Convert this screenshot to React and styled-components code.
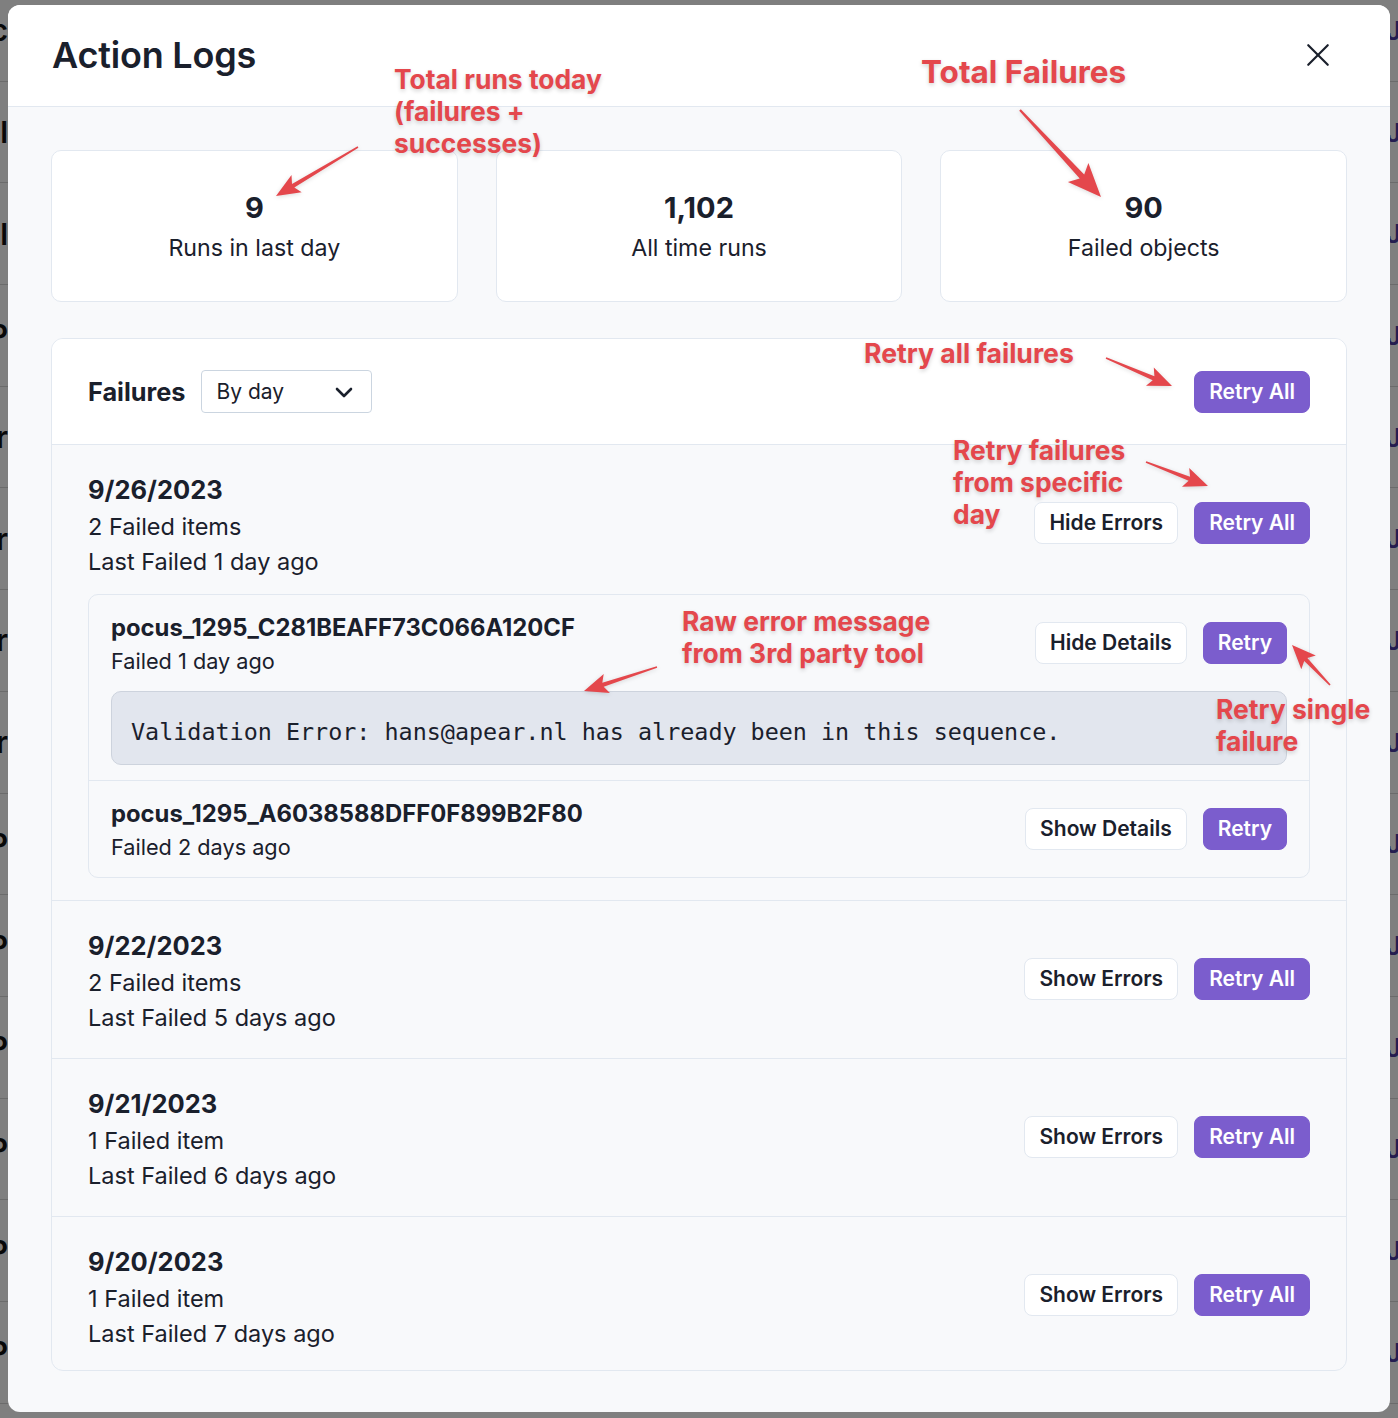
import React from 'react';
import styled, { createGlobalStyle } from 'styled-components';

const GlobalStyle = createGlobalStyle`
  html, body {
    margin: 0;
    padding: 0;
  }
  body {
    font-family: Inter, "Noto Sans", "Liberation Sans", sans-serif;
    color: #1a202c;
    background: #ffffff;
    overflow: hidden;
  }
  * { box-sizing: border-box; }
`;

const bgRows = [
  ['Sync', 'J'], ['Pull', 'J'], ['Pull', 'J'], ['ExP', 'J'], ['Ter', 'J'], ['Ter', 'J'], ['Ter', 'J'],
  ['Ter', 'J'], ['ExP', 'J'], ['ExP', 'J'], ['ExP', 'J'], ['ExP', 'J'], ['ExP', 'J'], ['ExP', 'J'], ['ExP', 'J'],
];

const stats = [
  { value: '9', label: 'Runs in last day' },
  { value: '1,102', label: 'All time runs' },
  { value: '90', label: 'Failed objects' },
];

const otherDays = [
  { date: '9/22/2023', count: '2 Failed items', last: 'Last Failed 5 days ago' },
  { date: '9/21/2023', count: '1 Failed item', last: 'Last Failed 6 days ago' },
  { date: '9/20/2023', count: '1 Failed item', last: 'Last Failed 7 days ago' },
];

const notes = [
  { x: 394, y: 63, size: 26.4, lines: ['Total runs today', '(failures +', 'successes)'] },
  { x: 921, y: 56, size: 31.5, lines: ['Total Failures'] },
  { x: 864, y: 337, size: 26.6, lines: ['Retry all failures'] },
  { x: 953, y: 434, size: 26.4, lines: ['Retry failures', 'from specific', 'day'] },
  { x: 682, y: 605, size: 26.4, lines: ['Raw error message', 'from 3rd party tool'] },
  { x: 1216, y: 693, size: 26.5, lines: ['Retry single', 'failure'] },
];

const arrows = [
  [358, 147, 276, 196, 1],
  [1020, 110, 1101, 197, 1.4],
  [1106, 358, 1172, 386, 1],
  [1146, 462, 1208, 486, 1],
  [657, 667, 584, 691, 1],
  [1330, 685, 1292, 645, 1],
];

function arrowPoints(x1, y1, x2, y2, s) {
  const dx = x2 - x1;
  const dy = y2 - y1;
  const len = Math.hypot(dx, dy);
  const ux = dx / len;
  const uy = dy / len;
  const nx = -uy;
  const ny = ux;
  const hl = 24 * s;
  const hw = 10 * s;
  const bx = x2 - ux * hl;
  const by = y2 - uy * hl;
  const nb = 0.8 * s;
  const sb = 2.2 * s;
  const nx2 = bx + ux * 4 * s;
  const ny2 = by + uy * 4 * s;
  const pts = [
    [x1 + nx * nb, y1 + ny * nb],
    [nx2 + nx * sb, ny2 + ny * sb],
    [bx + nx * hw, by + ny * hw],
    [x2, y2],
    [bx - nx * hw, by - ny * hw],
    [nx2 - nx * sb, ny2 - ny * sb],
    [x1 - nx * nb, y1 - ny * nb],
  ];
  return pts.map((p) => p.map((v) => v.toFixed(1)).join(',')).join(' ');
}

const CloseIcon = () => (
  <svg width="26" height="26" viewBox="0 0 24 24" fill="none" stroke="#1a202c" strokeWidth="2" strokeLinecap="round">
    <line x1="3" y1="3" x2="21" y2="21" />
    <line x1="21" y1="3" x2="3" y2="21" />
  </svg>
);

const Chevron = () => (
  <svg width="20" height="14" viewBox="0 0 20 14" fill="none" stroke="#1a202c" strokeWidth="2.6" strokeLinecap="round" strokeLinejoin="round">
    <polyline points="3,4 10,11 17,4" />
  </svg>
);

const App = () => {
  return (
    <>
      <GlobalStyle />
      <Page>
        <BgList>
          {bgRows.map(([l, r], i) => (
            <BgRow key={i}>
              <PeekLeft>{l}</PeekLeft>
              <PeekRight>{r}</PeekRight>
            </BgRow>
          ))}
        </BgList>
        <Backdrop />
        <Modal>
          <Header>
            <Title>Action Logs</Title>
            <CloseButton><CloseIcon /></CloseButton>
          </Header>
          <Body>
            <StatGrid>
              {stats.map((s) => (
                <StatCard key={s.label}>
                  <StatValue>{s.value}</StatValue>
                  <StatLabel>{s.label}</StatLabel>
                </StatCard>
              ))}
            </StatGrid>

            <FailuresCard>
              <FailHeader>
                <HeaderLeft>
                  <FailTitle>Failures</FailTitle>
                  <Select>
                    <span>By day</span>
                    <Chevron />
                  </Select>
                </HeaderLeft>
                <PrimaryButton>Retry All</PrimaryButton>
              </FailHeader>

              <DayGroup $expanded>
                <DayTop>
                  <DayInfo>
                    <DayDate>9/26/2023</DayDate>
                    <DayMeta>2 Failed items</DayMeta>
                    <DayMeta>Last Failed 1 day ago</DayMeta>
                  </DayInfo>
                  <Actions>
                    <GhostButton>Hide Errors</GhostButton>
                    <PrimaryButton>Retry All</PrimaryButton>
                  </Actions>
                </DayTop>
                <ItemsBox>
                  <Item>
                    <ItemRow>
                      <ItemInfo>
                        <ItemTitle>pocus_1295_C281BEAFF73C066A120CF</ItemTitle>
                        <ItemMeta>Failed 1 day ago</ItemMeta>
                      </ItemInfo>
                      <Actions>
                        <GhostButton>Hide Details</GhostButton>
                        <PrimaryButton>Retry</PrimaryButton>
                      </Actions>
                    </ItemRow>
                    <ErrorBox>Validation Error: hans@apear.nl has already been in this sequence.</ErrorBox>
                  </Item>
                  <Item>
                    <ItemRow>
                      <ItemInfo>
                        <ItemTitle>pocus_1295_A6038588DFF0F899B2F80</ItemTitle>
                        <ItemMeta>Failed 2 days ago</ItemMeta>
                      </ItemInfo>
                      <Actions>
                        <GhostButton>Show Details</GhostButton>
                        <PrimaryButton>Retry</PrimaryButton>
                      </Actions>
                    </ItemRow>
                  </Item>
                </ItemsBox>
              </DayGroup>

              {otherDays.map((d) => (
                <DayGroup key={d.date}>
                  <DayTop>
                    <DayInfo>
                      <DayDate>{d.date}</DayDate>
                      <DayMeta>{d.count}</DayMeta>
                      <DayMeta>{d.last}</DayMeta>
                    </DayInfo>
                    <Actions>
                      <GhostButton>Show Errors</GhostButton>
                      <PrimaryButton>Retry All</PrimaryButton>
                    </Actions>
                  </DayTop>
                </DayGroup>
              ))}
            </FailuresCard>
          </Body>
        </Modal>

        <ArrowLayer width="1398" height="1418" viewBox="0 0 1398 1418">
          {arrows.map(([x1, y1, x2, y2, s], i) => (
            <polygon key={i} points={arrowPoints(x1, y1, x2, y2, s)} fill="#e4474c" />
          ))}
        </ArrowLayer>
        {notes.map((n) => (
          <Note key={n.lines[0]} $x={n.x} $y={n.y} $size={n.size}>
            {n.lines.map((l) => <div key={l}>{l}</div>)}
          </Note>
        ))}
      </Page>
    </>
  );
};

const Page = styled.div`
  position: relative;
  width: 1398px;
  height: 1418px;
  overflow: hidden;
  background: #ffffff;
`;

const BgList = styled.div`
  display: flex;
  flex-direction: column;
  margin-top: -20px;
`;

const BgRow = styled.div`
  height: 101.7px;
  flex-shrink: 0;
  display: flex;
  align-items: center;
  justify-content: space-between;
  border-bottom: 1px solid #d6d6d6;
`;

const PeekLeft = styled.div`
  width: 8px;
  overflow: hidden;
  direction: rtl;
  white-space: nowrap;
  font-size: 30px;
  font-weight: 600;
  color: #111;
`;

const PeekRight = styled.div`
  width: 8px;
  overflow: hidden;
  white-space: nowrap;
  font-size: 26px;
  font-weight: 600;
  color: #4a3aa0;
  text-indent: -4px;
`;

const Backdrop = styled.div`
  position: absolute;
  inset: 0;
  background: rgba(0, 0, 0, 0.5);
`;

const Modal = styled.div`
  position: absolute;
  top: 5px;
  left: 8px;
  width: 1382px;
  height: 1407px;
  border-radius: 12px;
  background: #f8f9fb;
  overflow: hidden;
  display: flex;
  flex-direction: column;
`;

const Header = styled.div`
  height: 102px;
  flex-shrink: 0;
  background: #ffffff;
  border-bottom: 1px solid #e2e8f0;
  padding: 0 59px 0 44px;
  display: flex;
  align-items: center;
  justify-content: space-between;
`;

const Title = styled.h1`
  margin: 0;
  font-size: 36px;
  font-weight: 600;
  letter-spacing: -0.2px;
  color: #1a202c;
  padding-bottom: 2px;
`;

const CloseButton = styled.div`
  display: flex;
  align-items: center;
  padding-bottom: 2px;
`;

const Body = styled.div`
  padding: 43px 43px 0 43px;
`;

const StatGrid = styled.div`
  display: grid;
  grid-template-columns: repeat(3, 1fr);
  gap: 38px;
`;

const StatCard = styled.div`
  height: 152px;
  background: #ffffff;
  border: 1px solid #e2e8f0;
  border-radius: 10px;
  display: flex;
  flex-direction: column;
  align-items: center;
  justify-content: center;
  padding-top: 4px;
`;

const StatValue = styled.div`
  font-size: 29px;
  font-weight: 700;
  line-height: 40px;
`;

const StatLabel = styled.div`
  font-size: 23.2px;
  line-height: 40px;
  color: #1a202c;
`;

const FailuresCard = styled.div`
  margin-top: 36px;
  border: 1px solid #e2e8f0;
  border-radius: 12px;
  background: #f8f9fb;
  overflow: hidden;
`;

const FailHeader = styled.div`
  height: 106px;
  background: #ffffff;
  border-bottom: 1px solid #e2e8f0;
  padding: 0 36px;
  display: flex;
  align-items: center;
  justify-content: space-between;
`;

const HeaderLeft = styled.div`
  display: flex;
  align-items: center;
  gap: 15px;
`;

const FailTitle = styled.div`
  font-size: 25.3px;
  font-weight: 700;
`;

const Select = styled.div`
  width: 171px;
  height: 43px;
  border: 1px solid #cbd5e0;
  border-radius: 4px;
  background: #ffffff;
  display: flex;
  align-items: center;
  justify-content: space-between;
  padding: 0 17px 0 15px;
  font-size: 21px;
  color: #1a202c;
`;

const DayGroup = styled.div`
  padding: 26px 36px ${(p) => (p.$expanded ? '22px' : '23px')} 36px;
  border-bottom: 1px solid #e2e8f0;
  &:last-child {
    border-bottom: none;
    padding-bottom: 19px;
  }
`;

const DayTop = styled.div`
  display: flex;
  align-items: center;
  justify-content: space-between;
`;

const DayInfo = styled.div`
  display: flex;
  flex-direction: column;
`;

const DayDate = styled.div`
  font-size: 25.5px;
  font-weight: 700;
  line-height: 38px;
`;

const DayMeta = styled.div`
  font-size: 23.5px;
  line-height: 35px;
`;

const Actions = styled.div`
  display: flex;
  align-items: center;
  gap: 16px;
  margin-bottom: 5px;
`;

const ButtonBase = styled.button`
  height: 42px;
  padding: 0 14px;
  border-radius: 8px;
  font-family: Inter, "Noto Sans", sans-serif;
  font-size: 21px;
  font-weight: 600;
  cursor: pointer;
  white-space: nowrap;
`;

const PrimaryButton = styled(ButtonBase)`
  background: #7b5dcd;
  border: 1px solid #7b5dcd;
  color: #ffffff;
`;

const GhostButton = styled(ButtonBase)`
  background: #ffffff;
  border: 1px solid #e2e8f0;
  color: #1a202c;
`;

const ItemsBox = styled.div`
  margin-top: 15px;
  border: 1px solid #e2e8f0;
  border-radius: 10px;
  background: #f8f9fb;
`;

const Item = styled.div`
  padding: 17px 22px 11px 22px;
  border-bottom: 1px solid #e2e8f0;
  &:last-child {
    border-bottom: none;
    padding-bottom: 13px;
  }
`;

const ItemRow = styled.div`
  display: flex;
  align-items: center;
  justify-content: space-between;
`;

const ItemInfo = styled.div`
  display: flex;
  flex-direction: column;
`;

const ItemTitle = styled.div`
  font-size: 23.8px;
  font-weight: 700;
  line-height: 32px;
`;

const ItemMeta = styled.div`
  font-size: 21.7px;
  line-height: 34px;
`;

const ErrorBox = styled.div`
  margin: 13px 0 4px 0;
  height: 74px;
  display: flex;
  align-items: center;
  padding: 8px 20px 0 19px;
  background: #e2e6ee;
  border: 1px solid #cdd3dd;
  border-radius: 10px;
  font-family: "DejaVu Sans Mono", "Liberation Mono", monospace;
  font-size: 23.4px;
  color: #1a202c;
  white-space: nowrap;
`;

const ArrowLayer = styled.svg`
  position: absolute;
  top: 0;
  left: 0;
  pointer-events: none;
  filter: drop-shadow(0 1px 2px rgba(0, 0, 0, 0.15));
`;

const Note = styled.div`
  position: absolute;
  top: ${(p) => p.$y}px;
  left: ${(p) => p.$x}px;
  font-size: ${(p) => p.$size}px;
  line-height: 32px;
  font-weight: 700;
  color: #e4474c;
  white-space: nowrap;
  text-shadow: 0 2px 4px rgba(0, 0, 0, 0.18);
  pointer-events: none;
`;

export default App;
